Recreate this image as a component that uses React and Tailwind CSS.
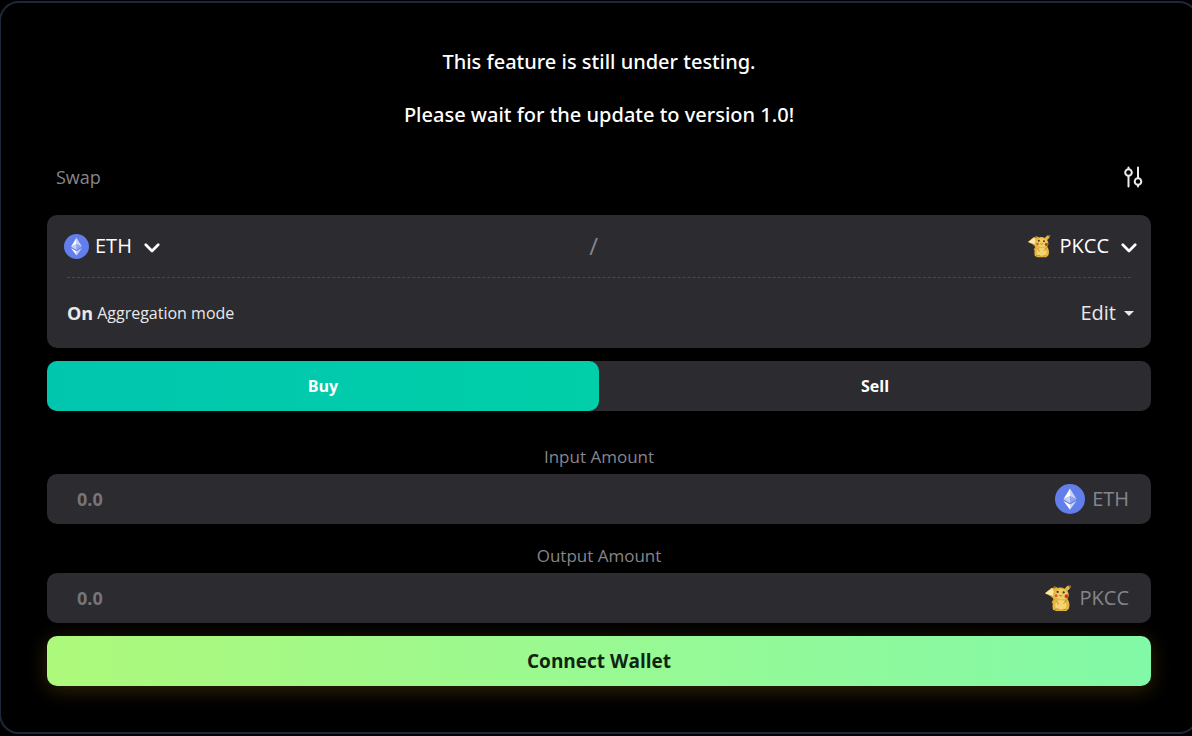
import React, { useState } from 'react';

function EthIcon({ className }) {
  return (
    <svg viewBox="0 0 30 30" className={className} aria-hidden="true">
      <circle cx="15" cy="15" r="15" fill="#627eea" />
      <path d="M15 4.5v7.8l6.6 3z" fill="#c9d4f8" />
      <path d="M15 4.5L8.4 15.3l6.6-3z" fill="#fff" />
      <path d="M15 12.3v6.9l6.6-3.9z" fill="#8fa3ef" />
      <path d="M8.4 15.3l6.6 3.9v-6.9z" fill="#c3cff8" />
      <path d="M15 20.6v5.2l6.6-9.1z" fill="#c9d4f8" />
      <path d="M15 25.8v-5.2l-6.6-3.9z" fill="#fff" />
    </svg>
  );
}

function PkccIcon({ className }) {
  return (
    <svg viewBox="0 0 30 30" className={className} aria-hidden="true">
      <path d="M0 10L7 4l4 1 3 9-3 8-4-2 2-4-3-3z" fill="#dca438" />
      <path d="M0 10L7.500 4.500l3.500 1.500-1 7-4-1z" fill="#fbe8a6" />
      <path d="M8 5L10 2.500l4 1.800c2-.8 5-.6 7 .7l3-3L28 2l-1.500 3-2.500 2.500c2 3 2 6 0 8.500 2 3 3 6 1.500 10.500L23 29H12l-3.500-1.500c-1-4.500-.5-7.500 2-10.500C8.500 14 8 10.500 9.500 8z" fill="#e5b740" />
      <path d="M12.500 7c2-2 7-2 9.500 0s2.500 6 .5 8c-3 2-7 2-9.500 0-2-2-2.500-6-.5-8z" fill="#efcf62" />
      <path d="M12.500 19c2-2 7-2 9 0s2 6 0 8h-8.500c-3-2-2.500-5-.5-8z" fill="#f3d473" />
      <path d="M12 18c1 1 2 2 2 4M23 17c-1 2-2 3-3 4M10.500 27.500c2-1 4-1 5 .5M19 28c1-1 3-1 4-.5" stroke="#b9782a" strokeWidth="1" fill="none" />
      <path d="M8.500 4.200L10 2.500l2 .9-1.800 1.500zM25 2l3 0-1.200 2.600z" fill="#8a6228" />
      <circle cx="13.500" cy="8.500" r="1.200" fill="#4b2c18" />
      <circle cx="20" cy="9" r="1.200" fill="#4b2c18" />
      <path d="M15.500 12c1 1 2 1 3 0" stroke="#a0602a" strokeWidth="1" fill="none" />
      <circle cx="12" cy="12.500" r="1.500" fill="#dc5a2c" />
      <circle cx="23" cy="13" r="2" fill="#cb3a1f" />
    </svg>
  );
}

function ChevronIcon() {
  return (
    <svg viewBox="0 0 16 10" className="w-4 h-[10px] mt-1" fill="none" stroke="currentColor" strokeWidth="2.700" strokeLinecap="round" strokeLinejoin="round" aria-hidden="true">
      <path d="M1.800 1.800L8 8l6.200-6.200" />
    </svg>
  );
}

function SettingsIcon() {
  return (
    <svg viewBox="0 0 20 22" className="w-5 h-[22px]" fill="none" stroke="currentColor" strokeWidth="2" strokeLinecap="round" aria-hidden="true">
      <path d="M5.500 1.500v1.500M5.500 10v10.500M15 1.500V12M15 19v1.500" />
      <circle cx="5.500" cy="6.500" r="3.300" />
      <circle cx="15" cy="15.500" r="3.300" />
    </svg>
  );
}

function AmountField({ id, label, value, onChange, symbol, children }) {
  return (
    <div>
      <label htmlFor={id} className="block text-center text-[17px] leading-[35px] text-[#85868b]">{label}</label>
      <div className="flex items-center h-[50px] rounded-[10px] bg-[#2b2b30] pl-[30px] pr-[22px]">
        <input
          id={id}
          type="text"
          inputMode="decimal"
          placeholder="0.0"
          value={value}
          onChange={e => onChange(e.target.value)}
          className="flex-1 min-w-0 bg-transparent outline-none text-lg font-bold text-white placeholder:text-[#75757a]"
        />
        {children}
        <span className="ml-[7px] text-xl text-[#85868b]">{symbol}</span>
      </div>
    </div>
  );
}

export default function App() {
  const [side, setSide] = useState('buy');
  const [input, setInput] = useState('');
  const [output, setOutput] = useState('');

  return (
    <div className="bg-black min-h-screen overflow-hidden pt-px font-['Segoe_UI','Open_Sans','Noto_Sans',sans-serif]">
      <main className="-ml-px -mr-[7px] border-2 border-[#20263a] rounded-[20px] bg-black px-[46px] pt-8 pb-[46px]">
        <div className="text-center text-xl leading-[53px] font-medium text-white font-['Segoe_UI','Noto_Sans',sans-serif]">
          <p className="h-[53px]">This feature is still under testing.</p>
          <p className="h-[53px]">Please wait for the update to version 1.0!</p>
        </div>

        <div className="flex items-center justify-between h-[72px] mb-[2px] pl-[9px] pr-2">
          <h1 className="text-lg text-[#85868b]">Swap</h1>
          <button aria-label="Settings" className="text-[#ececec]"><SettingsIcon /></button>
        </div>

        {/* Pair */}
        <section className="rounded-[10px] bg-[#2b2b30] h-[133px]">
          <div className="flex items-center justify-between h-[62px] pl-[17px] pr-[14px] text-xl text-white">
            <button className="flex items-center">
              <EthIcon className="w-[25px] h-[25px] mr-[6px]" />
              <span className="mr-3">ETH</span>
              <ChevronIcon />
            </button>
            <span className="text-2xl text-[#85868b]">/</span>
            <button className="flex items-center">
              <PkccIcon className="w-6 h-6 mr-2" />
              <span className="mr-3">PKCC</span>
              <ChevronIcon />
            </button>
          </div>
          <div className="mx-5 border-t border-dashed border-[#48484d]" />
          <div className="flex items-center justify-between h-[70px] pl-5 pr-[17px] text-[#e8e8e8]">
            <p className="flex items-center gap-1">
              <b className="text-lg">On</b>
              <span className="text-base">Aggregation mode</span>
            </p>
            <button className="flex items-center gap-2 text-xl">
              Edit
              <svg viewBox="0 0 10 5" className="w-[10px] h-[5px]" fill="currentColor" aria-hidden="true"><path d="M0 0h10L5 5z" /></svg>
            </button>
          </div>
        </section>

        <div className="flex mt-[13px] h-[50px] rounded-[10px] bg-[#2b2b30] text-base font-bold text-white">
          <button
            onClick={() => setSide('buy')}
            className={`flex-1 rounded-[10px] ${side === 'buy' ? 'bg-linear-to-r from-[#00c6ae] to-[#00cfa9]' : ''}`}
          >
            Buy
          </button>
          <button
            onClick={() => setSide('sell')}
            className={`flex-1 rounded-[10px] ${side === 'sell' ? 'bg-linear-to-r from-[#00c6ae] to-[#00cfa9]' : ''}`}
          >
            Sell
          </button>
        </div>

        <div className="mt-7 flex flex-col gap-[14px]">
          <AmountField id="input-amount" label="Input Amount" value={input} onChange={setInput} symbol="ETH">
            <EthIcon className="w-[30px] h-[30px]" />
          </AmountField>
          <AmountField id="output-amount" label="Output Amount" value={output} onChange={setOutput} symbol="PKCC">
            <PkccIcon className="w-[28px] h-[28px]" />
          </AmountField>
        </div>

        <button className="mt-[13px] w-full h-[50px] rounded-[10px] bg-linear-to-r from-[#adf97b] to-[#82f9a7] shadow-[0_4px_20px_rgba(255,190,40,0.2)] text-[19px] font-bold text-[#10240f]">
          Connect Wallet
        </button>
      </main>
    </div>
  );
}
